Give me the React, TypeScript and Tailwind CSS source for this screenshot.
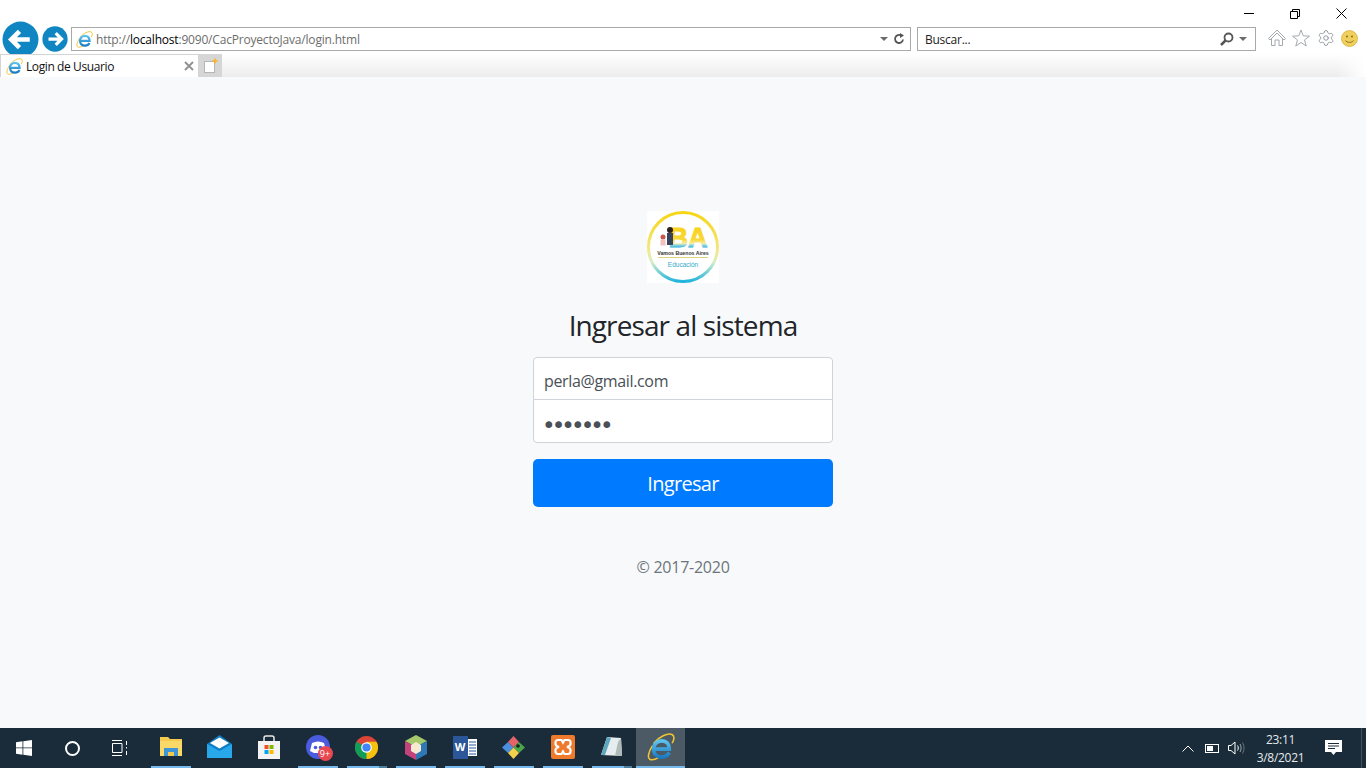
import React from "react";
import { Settings } from "lucide-react";

const font = "font-['Open_Sans','Noto_Sans',sans-serif]";

function IE({ size = 16, id }: { size?: number; id: string }) {
  return (
    <svg width={size} height={size} viewBox="0 0 32 32" fill="none">
      <defs>
        <linearGradient id={id} x1="0" y1="0" x2="0" y2="1">
          <stop offset="0" stopColor="#5cc3f0" />
          <stop offset="1" stopColor="#1a7cc4" />
        </linearGradient>
      </defs>
      <path d="M8 11.500C13 5 24 -1 29 2C32 4 30.500 9 29 11" stroke="#efc436" strokeWidth="1.800" strokeLinecap="round" />
      <path d="M6 15C1.500 22 0.500 28 3 30C6 31.500 10 30 13 28" stroke="#efc436" strokeWidth="1.800" strokeLinecap="round" />
      <path
        d="M8 18.500H25.500C25.500 12.500 22 9 17 9C11.500 9 7.500 13 7.500 18.500C7.500 24 11.500 27.500 17 27.500C20.500 27.500 23.500 26 25.500 22.500"
        stroke={`url(#${id})`}
        strokeWidth="4.200"
      />
    </svg>
  );
}

function Round({ size, dir }: { size: number; dir: "l" | "r" }) {
  return (
    <svg width={size} height={size} viewBox="0 0 36 36" className="shrink-0">
      <circle cx="18" cy="18" r="17.500" fill="#0f86c1" />
      <path
        d={dir === "l" ? "M27 18H10M17 10L9 18L17 26" : "M9 18H26M19 10L27 18L19 26"}
        stroke="#fff"
        strokeWidth="4.500"
        fill="none"
      />
    </svg>
  );
}

function Home() {
  return (
    <svg width="18" height="18" viewBox="0 0 18 18" fill="none" stroke="#a4a9ad" strokeWidth="1">
      <path d="M0.500 9.500L9 1L17.500 9.500L16 11L9 4L2 11ZM3.500 10V16.500H7V11H11V16.500H14.500V10" />
    </svg>
  );
}
function Star() {
  return (
    <svg width="18" height="18" viewBox="0 0 18 18" fill="none" stroke="#a4a9ad" strokeWidth="1">
      <path d="M9 1L11.200 6.800L17.500 7.200L12.500 10.900L14.200 17L9 13.500L3.800 17L5.500 10.900L0.500 7.200L6.800 6.800Z" />
    </svg>
  );
}
function Smile() {
  return (
    <svg width="17" height="17" viewBox="0 0 17 17">
      <circle cx="8.500" cy="8.500" r="8" fill="#efcf5e" stroke="#d9b23a" strokeWidth="0.800" />
      <circle cx="6" cy="6.500" r="1" fill="#8a6d14" />
      <circle cx="11" cy="6.500" r="1" fill="#8a6d14" />
      <path d="M4.500 10.500C6 13 11 13 12.500 10.500" stroke="#8a6d14" fill="none" />
    </svg>
  );
}

function Caret() {
  return <span className="w-0 h-0 border-x-[4px] border-x-transparent border-t-[4px] border-t-[#6b6b6b]" />;
}

function Logo() {
  return (
    <div className="w-[72px] h-[72px] bg-white">
      <svg width="72" height="72" viewBox="0 0 72 72">
        <defs>
          <linearGradient id="ring" x1="0" y1="0" x2="0" y2="1">
            <stop offset="0" stopColor="#f6d512" />
            <stop offset="0.55" stopColor="#f2e88a" />
            <stop offset="0.72" stopColor="#d5eec9" />
            <stop offset="1" stopColor="#1fb4dc" />
          </linearGradient>
          <linearGradient id="ba" x1="0" y1="0" x2="0" y2="1">
            <stop offset="0" stopColor="#f8cf10" />
            <stop offset="0.55" stopColor="#f8d838" />
            <stop offset="0.68" stopColor="#f7ecA0" />
            <stop offset="0.74" stopColor="#8fd6e2" />
            <stop offset="0.82" stopColor="#2eaed6" />
          </linearGradient>
        </defs>
        <circle cx="36" cy="36" r="34.500" fill="#fff" stroke="url(#ring)" strokeWidth="3" />
        <text x="41" y="36" textAnchor="middle" fontFamily="Liberation Sans" fontWeight="700" fontSize="27" fill="url(#ba)" stroke="url(#ba)" strokeWidth="1">BA</text>
        <circle cx="16" cy="26" r="2.500" fill="#c9574a" />
        <rect x="13.500" y="28.500" width="5" height="6" fill="#f3c0c0" />
        <circle cx="23" cy="19" r="3" fill="#2b2320" />
        <rect x="20" y="22" width="6" height="12" fill="#38445c" />
        <text x="36" y="43.500" textAnchor="middle" fontFamily="Liberation Sans" fontWeight="700" fontSize="5.200" fill="#333">Vamos Buenos Aires</text>
        <rect x="11" y="46" width="50" height="1" fill="#d8d37c" />
        <text x="36" y="56" textAnchor="middle" fontFamily="Liberation Sans" fontSize="6.500" fill="#31a9c9">Educación</text>
      </svg>
    </div>
  );
}

function TaskItem({ children, bar, stacked, active }: { children: React.ReactNode; bar?: boolean; stacked?: boolean; active?: boolean }) {
  return (
    <div className={`w-[49px] h-10 flex flex-col ${active ? "bg-[#4c5a65]" : ""}`}>
      <div className="flex-1 flex items-center justify-center">{children}</div>
      {active ? (
        <div className="h-[2px] bg-[#76b9ed]" />
      ) : bar ? (
        <div className="h-[2px] flex justify-center">
          <div className={`bg-[#76b9ed] ${stacked ? "w-[32px]" : "w-10"}`} />
          {stacked && <div className="w-[8px] bg-[#4d7f9e]" />}
        </div>
      ) : (
        <div className="h-[2px]" />
      )}
    </div>
  );
}

function Folder() {
  return (
    <svg width="24" height="22" viewBox="0 0 24 22">
      <path d="M1 1H9L11 3H23V20H1Z" fill="#f4c94f" />
      <rect x="1" y="5" width="22" height="15" fill="#fbd968" />
      <rect x="5" y="12" width="14" height="8" fill="#3f95d6" />
      <rect x="9" y="16" width="6" height="4" fill="#f4c94f" />
    </svg>
  );
}
function Mail() {
  return (
    <svg width="25" height="24" viewBox="0 0 25 24">
      <path d="M0 9L12.500 0L25 9V23H0Z" fill="#0e7fc4" />
      <path d="M0 9L12.500 16L25 9V23H0Z" fill="#28a8ea" />
      <path d="M3 8L12.500 2.500L22 8L12.500 13.500Z" fill="#ffffff" />
    </svg>
  );
}
function Store() {
  return (
    <svg width="24" height="24" viewBox="0 0 24 24">
      <path d="M7 6V3C7 1.500 8 1 9 1H15C16 1 17 1.500 17 3V6" stroke="#e8e8e8" strokeWidth="1.500" fill="none" />
      <rect x="1" y="6" width="22" height="18" fill="#f3f3f3" />
      <rect x="7.500" y="10" width="4" height="4" fill="#f05022" />
      <rect x="12.500" y="10" width="4" height="4" fill="#7fba00" />
      <rect x="7.500" y="15" width="4" height="4" fill="#01a4ef" />
      <rect x="12.500" y="15" width="4" height="4" fill="#ffb900" />
    </svg>
  );
}
function Discord() {
  return (
    <div className="relative w-[24px] h-[24px]">
      <svg width="24" height="24" viewBox="0 0 24 24">
        <circle cx="12" cy="12" r="12" fill="#4a5be0" />
        <path d="M6 8C10 6 14 6 18 8L20 16L16 18L8 18L4 16Z" fill="#fff" />
        <circle cx="9.500" cy="12.500" r="1.800" fill="#4a5be0" />
        <circle cx="14.500" cy="12.500" r="1.800" fill="#4a5be0" />
      </svg>
      <span className={`absolute right-[-3px] bottom-[-2px] w-[15px] h-[15px] rounded-full bg-[#e8484f] text-white text-[9px] leading-[15px] text-center ${font}`}>9+</span>
    </div>
  );
}
function Chrome() {
  return (
    <svg width="23" height="23" viewBox="0 0 24 24">
      <circle cx="12" cy="12" r="12" fill="#db4437" />
      <path d="M12 12L1.600 6A12 12 0 0 0 12 24L18 13.500Z" fill="#0f9d58" />
      <path d="M12 12L12 24A12 12 0 0 0 22.400 6H12Z" fill="#f4c20d" />
      <circle cx="12" cy="12" r="5.500" fill="#fff" />
      <circle cx="12" cy="12" r="4.300" fill="#4285f4" />
    </svg>
  );
}
function Box() {
  return (
    <svg width="22" height="25" viewBox="0 0 22 25">
      <path d="M11 0L22 6L11 12L0 6Z" fill="#a5c96b" />
      <path d="M0 6L11 12V25L0 19Z" fill="#c4437d" />
      <path d="M22 6L11 12V25L22 19Z" fill="#2e78b5" />
      <path d="M11 7L16 10V16L11 19L6 16V10Z" fill="#f6ead2" />
    </svg>
  );
}
function Word() {
  return (
    <div className="flex items-center">
      <div className={`w-[15px] h-[23px] bg-[#2b579a] text-white text-[11px] font-bold flex items-center justify-center ${font}`}>W</div>
      <svg width="9" height="17" viewBox="0 0 9 17">
        <rect width="9" height="17" fill="#fff" />
        <path d="M1 3H8M1 6H8M1 9H8M1 12H8M1 15H8" stroke="#2b579a" />
      </svg>
    </div>
  );
}
function Git() {
  return (
    <svg width="25" height="25" viewBox="0 0 25 25">
      <path d="M12.500 12.500L7 7L1 12.500L7 18Z" fill="#4a8fe0" />
      <path d="M12.500 12.500L7 7L12.500 1L18 7Z" fill="#e5636b" />
      <path d="M12.500 12.500L18 7L24 12.500L18 18Z" fill="#4aa64a" />
      <path d="M12.500 12.500L18 18L12.500 24L7 18Z" fill="#f2d14c" />
      <circle cx="17" cy="11" r="1.800" fill="#1a1a1a" />
    </svg>
  );
}
function Xampp() {
  return (
    <svg width="24" height="24" viewBox="0 0 24 24">
      <rect width="24" height="24" rx="2" fill="#ee7b2d" />
      <path d="M7 5H10.500L12 7.500L13.500 5H17C18.500 5 19.500 6 19.500 7.500V9C19.500 10.500 18 11.500 16 12C18 12.500 19.500 13.500 19.500 15V16.500C19.500 18 18.500 19 17 19H13.500L12 16.500L10.500 19H7C5.500 19 4.500 18 4.500 16.500V15C4.500 13.500 6 12.500 8 12C6 11.500 4.500 10.500 4.500 9V7.500C4.500 6 5.500 5 7 5Z" fill="none" stroke="#fff" strokeWidth="2.200" />
    </svg>
  );
}
function Notepad() {
  return (
    <svg width="24" height="24" viewBox="0 0 24 24">
      <path d="M7 2L21 3L22 21L1 20Z" fill="#e6edef" />
      <path d="M7 2L11 3L5 20L1 20Z" fill="#5fa7bd" />
      <path d="M18 7L21 3L22 21L15 21Z" fill="#aeb9b8" />
    </svg>
  );
}

export default function App() {
  return (
    <div className={`w-[1366px] h-[768px] flex flex-col overflow-hidden bg-white ${font}`}>
      <header className="h-[77px] shrink-0 flex flex-col bg-white">
        <div className="h-[27px] flex justify-end pr-[1px]">
          <div className="flex w-[46px] h-[27px] items-center justify-center">
            <span className="w-[10px] h-px bg-black" />
          </div>
          <div className="flex w-[46px] h-[27px] items-center justify-center">
            <svg width="10" height="10" viewBox="0 0 10 10" fill="none" stroke="#000">
              <path d="M0.500 2.500H7.500V9.500H0.500ZM2.500 2.500V0.500H9.500V7.500H7.500" />
            </svg>
          </div>
          <div className="flex w-[47px] h-[27px] items-center justify-center">
            <svg width="11" height="11" viewBox="0 0 11 11" stroke="#000">
              <path d="M0.500 0.500L10.500 10.500M10.500 0.500L0.500 10.500" />
            </svg>
          </div>
        </div>
        <div className="h-[24px] flex items-center">
          <div className="ml-[2px] -my-2">
            <Round size={37} dir="l" />
          </div>
          <div className="ml-[3px]">
            <Round size={26} dir="r" />
          </div>
          <div className="ml-[3px] w-[840px] h-[24px] border border-[#a9a9a9] flex items-center bg-white">
            <div className="ml-[3px] w-[18px] flex justify-center">
              <IE size={17} id="ie1" />
            </div>
            <div className="ml-[3px] mt-[2px] text-[12px] tracking-[-0.19px] text-[#6d6d6d] flex-1">
              http://<span className="text-black">localhost</span>:9090/CacProyectoJava/login.html
            </div>
            <Caret />
            <svg className="ml-[5px] mr-[5px]" width="12" height="12" viewBox="0 0 12 12" fill="none" stroke="#555" strokeWidth="1.800">
              <path d="M10 6.500A4 4 0 1 1 8 2.500" />
              <path d="M7 0L11 2.500L7 5Z" fill="#555" stroke="none" />
            </svg>
          </div>
          <div className="ml-[6px] w-[339px] h-[24px] border border-[#a9a9a9] flex items-center bg-white">
            <div className="ml-[7px] mt-[2px] text-[12px] tracking-[-0.25px] text-[#222] flex-1">Buscar...</div>
            <svg width="14" height="14" viewBox="0 0 14 14" fill="none" stroke="#555" strokeWidth="1.800">
              <circle cx="8.500" cy="5.500" r="4" />
              <path d="M5.500 8.500L1 13" strokeWidth="2.500" />
            </svg>
            <span className="ml-[5px] mr-[8px] flex">
              <Caret />
            </span>
          </div>
          <div className="ml-[12px] flex items-center -mt-[2px]">
            <Home />
            <span className="ml-[6px] flex"><Star /></span>
            <span className="ml-[7px] flex"><Settings size={18} strokeWidth={1.200} color="#8b9196" /></span>
            <span className="ml-[6px] flex"><Smile /></span>
          </div>
        </div>
        <div className="mt-[3px] h-[23px] flex bg-gradient-to-b from-white to-[#ececec]">
          <div className="w-[199px] h-[23px] bg-white border border-b-0 border-[#d4d4d4] flex items-center">
            <div className="ml-[5px]">
              <IE size={17} id="ie2" />
            </div>
            <div className="ml-[3px] mt-[2px] flex-1 text-[12px] tracking-[-0.4px] text-[#111]">Login de Usuario</div>
            <svg className="mr-[4px]" width="10" height="10" viewBox="0 0 10 10" stroke="#8f8f8f" strokeWidth="1.800">
              <path d="M1 1L9 9M9 1L1 9" />
            </svg>
          </div>
          <div className="w-[23px] h-[23px] bg-[#d6d6d6] flex items-center justify-center">
            <svg width="16" height="17" viewBox="0 0 16 17">
              <rect x="1.500" y="4.500" width="10" height="11" fill="#fff" stroke="#b5b5b5" />
              <path d="M12 0.500L13 3L15.500 4L13 5L12 7.500L11 5L8.500 4L11 3Z" fill="#f7b32b" />
            </svg>
          </div>
          <div className="ml-auto w-[30px] bg-gradient-to-r from-transparent to-white" />
        </div>
      </header>

      <main className="flex-1 bg-[#f8f9fa] flex flex-col items-center pt-[134px]">
        <Logo />
        <h1 className="mt-[21px] text-[28px] leading-[42px] tracking-[-0.9px] font-normal text-[#212529]">Ingresar al sistema</h1>
        <div className="mt-[11px] w-[300px]">
          <input
            readOnly
            value="perla@gmail.com"
            className="block w-full h-[43px] px-[10px] pt-[4px] bg-white border border-[#ced4da] rounded-t-[4px] text-[16px] tracking-[-0.35px] text-[#495057] outline-none"
          />
          <input
            readOnly
            type="password"
            value="1234567"
            className="block w-full h-[44px] -mt-px pl-[8px] pr-[10px] pt-[8px] bg-white border border-[#ced4da] rounded-b-[4px] font-['DejaVu_Sans',sans-serif] text-[23px] tracking-[-3.9px] text-[#495057] outline-none"
          />
          <button className="mt-[16px] w-full h-[48px] pt-[2px] bg-[#007bff] rounded-[5px] text-white text-[20px] tracking-[-0.7px]">Ingresar</button>
        </div>
        <p className="mt-[48px] text-[16px] leading-[24px] tracking-[-0.25px] text-[#6c757d]">© 2017-2020</p>
      </main>

      <footer className="h-10 shrink-0 bg-[#1a2c3a] flex items-stretch text-white">
        <div className="w-[48px] flex items-center justify-center">
          <svg width="16" height="16" viewBox="0 0 16 16" fill="#fff">
            <path d="M0 2.200L6.500 1.300V7.500H0ZM7.300 1.200L16 0V7.500H7.300ZM0 8.300H6.500V14.700L0 13.800ZM7.300 8.300H16V16L7.300 14.800Z" />
          </svg>
        </div>
        <div className="w-[48px] flex items-center justify-center">
          <span className="w-[15px] h-[15px] rounded-full border-2 border-white" />
        </div>
        <div className="w-[48px] flex items-center justify-center">
          <svg width="18" height="16" viewBox="0 0 18 16" fill="none" stroke="#fff">
            <path d="M1 0.500H11M1 15.500H11M1.500 3.500H11V12.500H1.500ZM15.500 1V5M15.500 7V8.500M15.500 11V15" />
          </svg>
        </div>
        <div className="ml-[2px] flex">
          <TaskItem bar><Folder /></TaskItem>
          <TaskItem><Mail /></TaskItem>
          <TaskItem><Store /></TaskItem>
          <TaskItem bar><Discord /></TaskItem>
          <TaskItem bar stacked><Chrome /></TaskItem>
          <TaskItem bar><Box /></TaskItem>
          <TaskItem bar><Word /></TaskItem>
          <TaskItem bar><Git /></TaskItem>
          <TaskItem bar><Xampp /></TaskItem>
          <TaskItem bar stacked><Notepad /></TaskItem>
          <TaskItem active><IE size={28} id="ie3" /></TaskItem>
        </div>
        <div className="flex-1" />
        <div className="flex items-center">
          <svg width="12" height="7" viewBox="0 0 12 7" fill="none" stroke="#fff">
            <path d="M0.500 6.500L6 1L11.500 6.500" />
          </svg>
          <svg className="ml-[11px]" width="15" height="9" viewBox="0 0 15 9" fill="none">
            <rect x="0.500" y="0.500" width="13" height="8" stroke="#fff" />
            <rect x="2" y="2" width="6" height="5" fill="#fff" />
          </svg>
          <svg className="ml-[8px]" width="17" height="14" viewBox="0 0 17 14" fill="none" stroke="#fff">
            <path d="M0.500 4.500H3L7 1V13L3 9.500H0.500Z" />
            <path d="M9.500 4.500C10.500 6 10.500 8 9.500 9.500" />
            <path d="M12 3C13.500 5.500 13.500 8.500 12 11" stroke="#9aa4ab" />
            <path d="M14.500 1.500C16.500 5 16.500 9 14.500 12.500" stroke="#6b7780" />
          </svg>
          <div className="ml-[7px] w-[57px] pt-[2px] text-center text-[12px] leading-[18px] tracking-[-0.3px] text-[#e6e9eb]">
            <div>23:11</div>
            <div>3/8/2021</div>
          </div>
          <div className="w-[48px] flex justify-center">
            <svg width="17" height="16" viewBox="0 0 17 16">
              <path d="M0 0H17V12H11L8.500 15L6 12H0Z" fill="#fff" />
              <path d="M3 3.500H14M3 6H14M3 8.500H10" stroke="#1a2c3a" />
            </svg>
          </div>
          <div className="ml-[4px] w-[5px] h-10 border-l border-[#43525e]" />
        </div>
      </footer>
    </div>
  );
}
